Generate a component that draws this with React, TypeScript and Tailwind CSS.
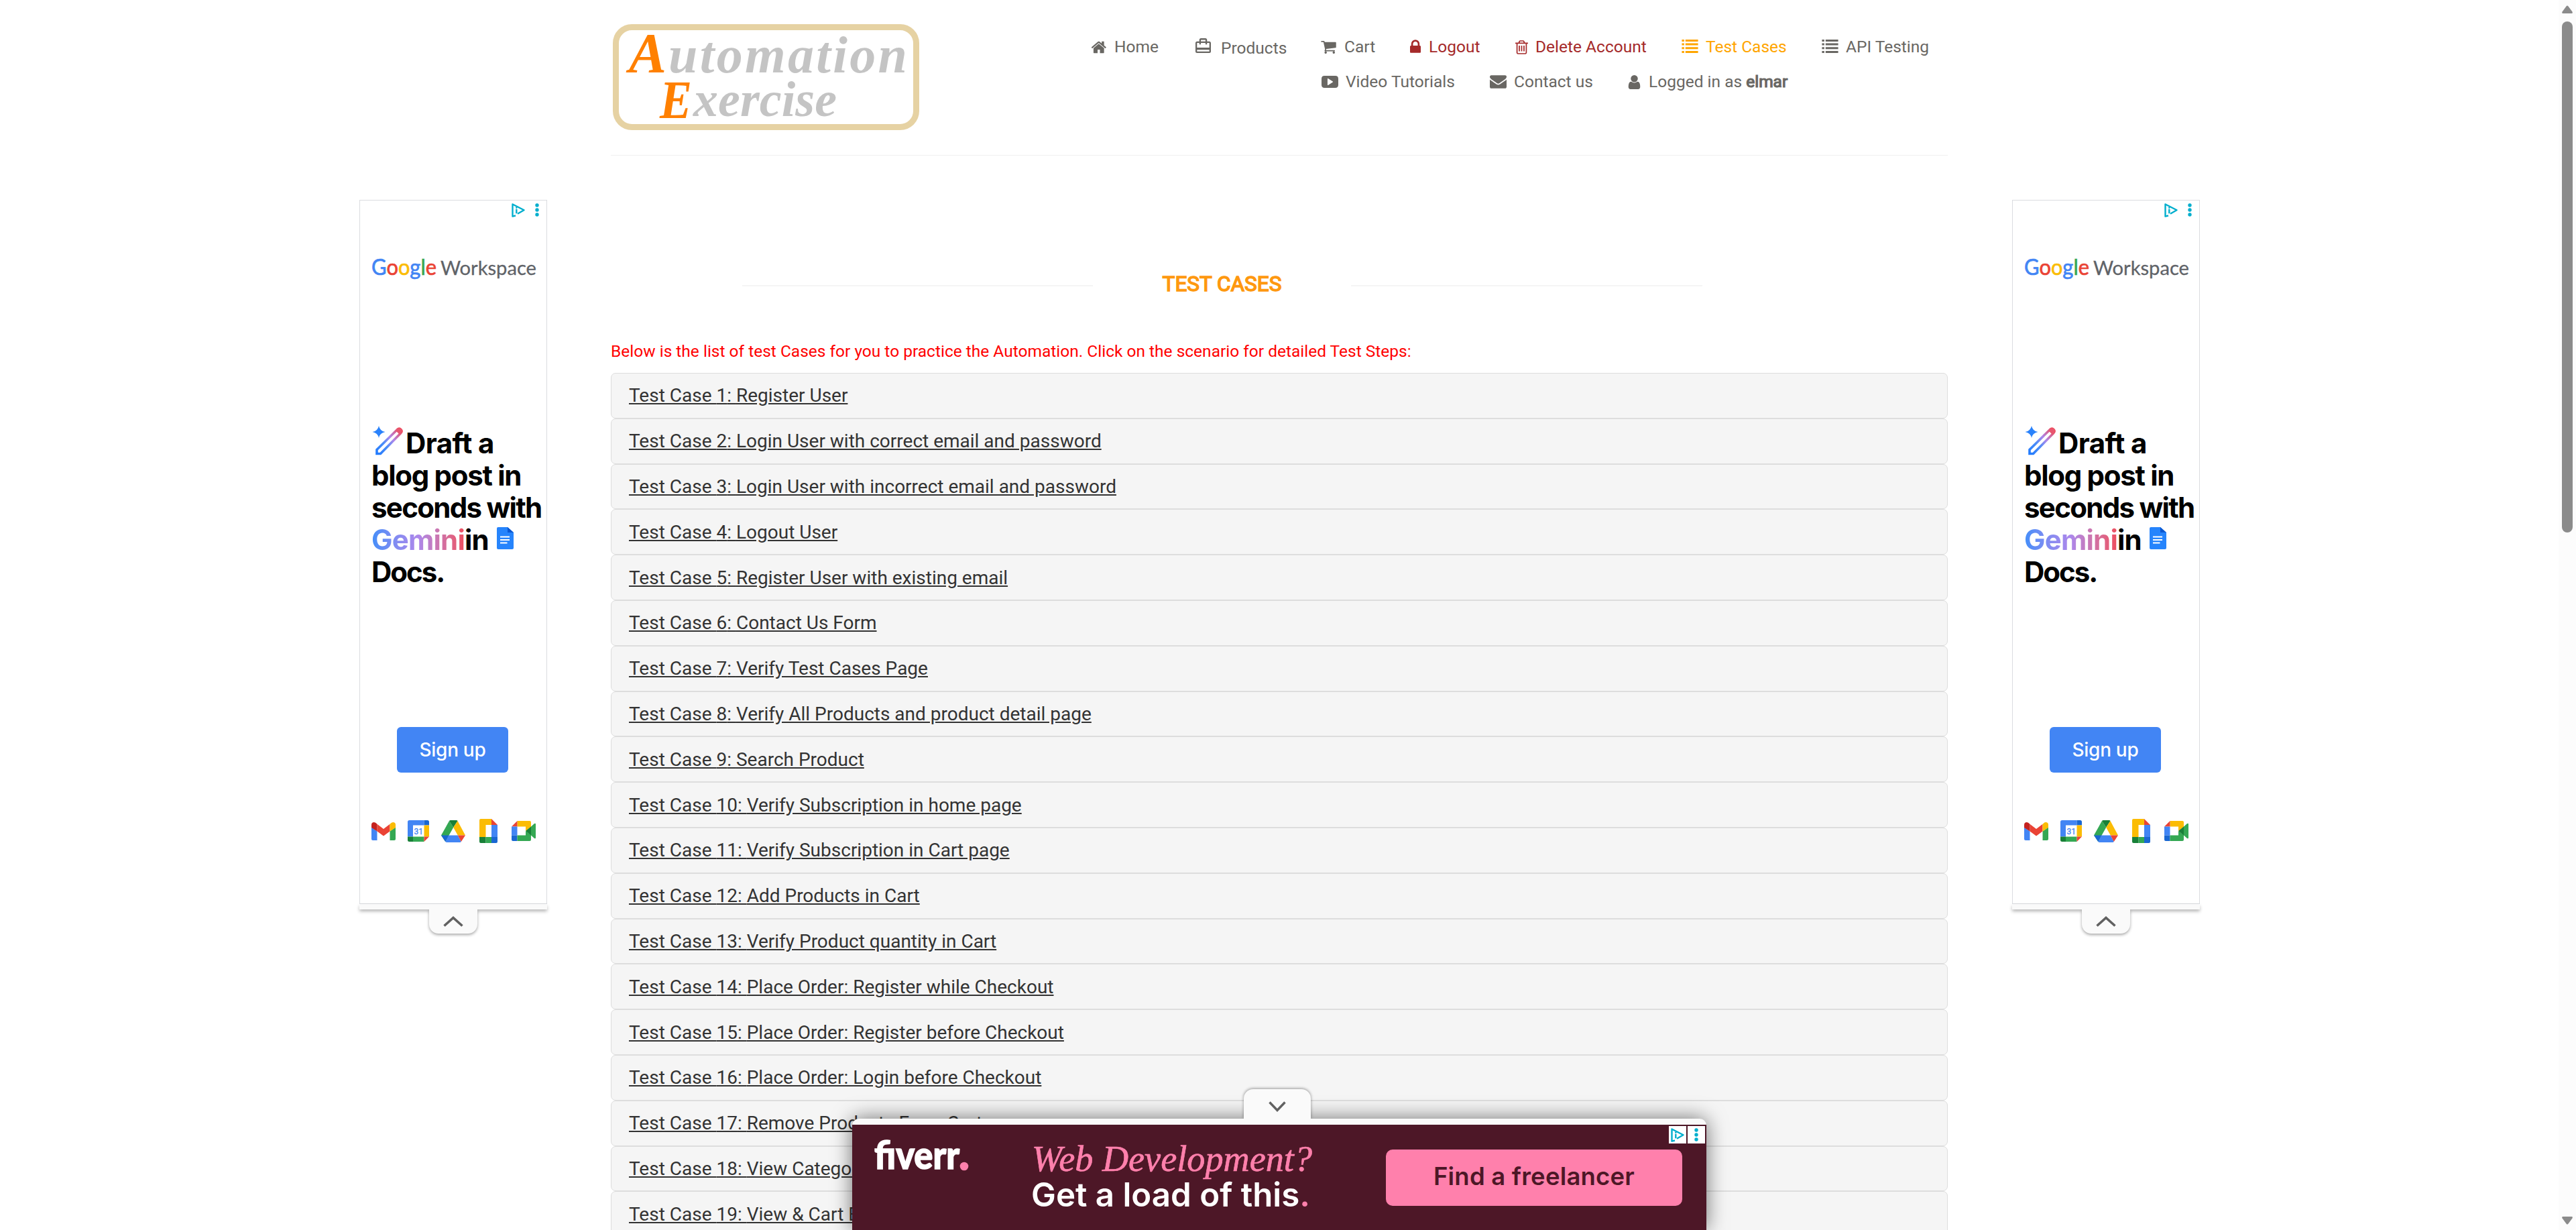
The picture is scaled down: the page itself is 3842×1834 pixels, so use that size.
import React from "react";

const ICONS = {
  home: "M1408 992v480q0 26-19 45t-45 19h-384v-384h-256v384h-384q-26 0-45-19t-19-45v-480q0-1 .5-3t.5-3l575-474 575 474q1 2 1 6zm223-69l-62 74q-8 9-21 11h-3q-13 0-21-7l-692-577-692 577q-12 8-24 7-13-2-21-11l-62-74q-8-10-7-23.5t11-21.5l719-599q32-26 76-26t76 26l244 204v-195q0-14 9-23t23-9h192q14 0 23 9t9 23v408l219 182q10 8 11 21.5t-7 23.5z",
  cart: "M704 1536q0 52-38 90t-90 38-90-38-38-90 38-90 90-38 90 38 38 90zm896 0q0 52-38 90t-90 38-90-38-38-90 38-90 90-38 90 38 38 90zm128-1088v512q0 24-16.5 42.5t-40.5 21.5l-1044 122q13 60 13 70 0 16-24 64h920q26 0 45 19t19 45-19 45-45 19h-1024q-26 0-45-19t-19-45q0-11 8-31.5t16-36 21.5-40 15.5-29.5l-177-823h-204q-26 0-45-19t-19-45 19-45 45-19h256q16 0 28.5 6.5t19.5 15.5 13 24.5 8 26 5.5 29.5 4.5 26h1201q26 0 45 19t19 45z",
  lock: "M640 768h512v-192q0-106-75-181t-181-75-181 75-75 181v192zm832 96v576q0 40-28 68t-68 28h-960q-40 0-68-28t-28-68v-576q0-40 28-68t68-28h32v-192q0-184 132-316t316-132 316 132 132 316v192h32q40 0 68 28t28 68z",
  trash: "M704 736v576q0 14-9 23t-23 9h-64q-14 0-23-9t-9-23v-576q0-14 9-23t23-9h64q14 0 23 9t9 23zm256 0v576q0 14-9 23t-23 9h-64q-14 0-23-9t-9-23v-576q0-14 9-23t23-9h64q14 0 23 9t9 23zm256 0v576q0 14-9 23t-23 9h-64q-14 0-23-9t-9-23v-576q0-14 9-23t23-9h64q14 0 23 9t9 23zm128 724v-948h-896v948q0 22 7 40.5t14.5 27 10.5 8.5h832q3 0 10.5-8.5t14.5-27 7-40.5zm-672-1076h448l-48-117q-7-9-17-11h-317q-10 2-17 11zm928 32v64q0 14-9 23t-23 9h-96v948q0 83-47 143.5t-113 60.5h-832q-66 0-113-58.5t-47-141.5v-952h-96q-14 0-23-9t-9-23v-64q0-14 9-23t23-9h309l70-167q15-37 54-63t79-26h320q40 0 79 26t54 63l70 167h309q14 0 23 9t9 23z",
  envelope: "M1792 710v794q0 66-47 113t-113 47h-1472q-66 0-113-47t-47-113v-794q44 49 101 87 362 246 497 345 57 42 92.5 65.5t94.5 48 110 24.5h2q51 0 110-24.5t94.5-48 92.5-65.5q170-123 498-345 57-39 100-87zm0-294q0 79-49 151t-122 123q-376 261-468 325-10 7-42.5 31t-54 38.5-52 32.5-57.5 27-50 9h-2q-23 0-50-9t-57.5-27-52-32.5-54-38.5-42.5-31q-91-64-262-182.5t-205-142.5q-62-42-117-115.5t-55-136.5q0-78 41.5-130t118.5-52h1472q65 0 112.5 47t47.5 113z",
  user: "M1536 1399q0 109-62.5 187t-150.5 78h-854q-88 0-150.5-78t-62.5-187q0-85 8.5-160.5t31.5-152 58.5-131 94-89 134.5-34.5q131 128 313 128t313-128q76 0 134.5 34.5t94 89 58.5 131 31.5 152 8.5 160.5zm-256-887q0 159-112.5 271.5t-271.5 112.5-271.5-112.5-112.5-271.5 112.5-271.5 271.5-112.5 271.5 112.5 112.5 271.5z",
  video: "M320 256h1152q320 0 320 320v640q0 320-320 320h-1152q-320 0-320-320v-640q0-320 320-320zm384 288q-64-30-64 40v624q0 66 64 40l500-312q44-36 0-72z",
  list: "M0 128h256v220h-256zM0 530h256v220h-256zM0 960h256v220h-256zM0 1390h256v220h-256zM400 128h1392v220h-1392zM400 530h1392v220h-1392zM400 960h1392v220h-1392zM400 1390h1392v220h-1392z",
};

type IconName = keyof typeof ICONS;

function Glyph({ name, box, className }: { name: IconName; box: string; className: string }) {
  return (
    <svg viewBox={box} className={className + " shrink-0"} fill="currentColor">
      <path fillRule="evenodd" d={ICONS[name]} />
    </svg>
  );
}

function SiteLogo() {
  return (
    <svg width="457" height="158" viewBox="914 36 457 158" className="mt-[36px] ml-[3px] shrink-0 overflow-visible">
      <rect x="918.5" y="40.5" width="448" height="149" rx="24" fill="none" stroke="#e6d2a3" strokeWidth="9" />
      <g fontFamily="'Liberation Serif', serif" fontStyle="italic" fontWeight="700">
        <text x="938" y="108" fontSize="84" fill="#ff8000" textLength="56" lengthAdjust="spacingAndGlyphs">A</text>
        <text x="997" y="108" fontSize="78" fill="#c4c4c4" textLength="356" lengthAdjust="spacing">utomation</text>
        <text x="984" y="176" fontSize="80" fill="#ff8000" textLength="48" lengthAdjust="spacingAndGlyphs">E</text>
        <text x="1034" y="173" fontSize="74" fill="#c4c4c4" textLength="214" lengthAdjust="spacing">xercise</text>
      </g>
    </svg>
  );
}

function NavItem({ width, color, icon, children }: { width: string; color: string; icon: React.ReactNode; children: React.ReactNode }) {
  return (
    <li className={"flex items-center whitespace-nowrap " + width + " " + color}>
      {icon}
      <span>{children}</span>
    </li>
  );
}

function Header() {
  return (
    <header className="flex h-[232px] border-b border-[#f0f0f0]">
      <SiteLogo />
      <nav className="ml-[257px] mt-[44px] text-[24.5px] leading-[52px] text-[#696763]">
        <ul className="flex">
          <NavItem width="w-[155px]" color="text-[#696763]" icon={<Glyph name="home" box="53 128 1664 1536" className="mr-[11px] h-[21px] w-[23px]" />}>Home</NavItem>
          <NavItem width="w-[187px]" color="text-[#696763]" icon={
            <svg viewBox="2 2 20 19" className="-mt-[5px] mr-[15px] h-[22px] w-[23px]" fill="currentColor">
              <path d="M20 6h-3V4c0-1.11-.89-2-2-2H9c-1.11 0-2 .89-2 2v2H4c-1.11 0-2 .89-2 2v11c0 1.11.89 2 2 2h16c1.11 0 2-.89 2-2V8c0-1.11-.89-2-2-2zM9 4h6v2H9V4zm11 15H4v-2h16v2zm0-5H4V8h3v2h2V8h6v2h2V8h3v6z" />
            </svg>
          }><span className="relative top-[2px]">Products</span></NavItem>
          <NavItem width="w-[133px]" color="text-[#696763]" icon={<Glyph name="cart" box="64 256 1664 1408" className="mr-[12px] h-[19px] w-[23px]" />}>Cart</NavItem>
          <NavItem width="w-[157px]" color="text-[#a52a2a]" icon={<Glyph name="lock" box="320 128 1152 1408" className="-mt-[3px] mr-[12px] h-[20px] w-[16px]" />}>Logout</NavItem>
          <NavItem width="w-[248px]" color="text-[#a52a2a]" icon={<Glyph name="trash" box="192 128 1408 1536" className="mr-[11px] h-[21px] w-[19px]" />}>Delete Account</NavItem>
          <NavItem width="w-[209px]" color="text-[#ffa500]" icon={<Glyph name="list" box="0 128 1792 1482" className="-mt-[2px] mr-[11px] h-[20px] w-[25px]" />}>Test Cases</NavItem>
          <NavItem width="w-[188px]" color="text-[#696763]" icon={<Glyph name="list" box="0 128 1792 1482" className="-mt-[2px] mr-[11px] h-[20px] w-[25px]" />}>API Testing</NavItem>
        </ul>
        <ul className="ml-[343px] flex">
          <NavItem width="w-[251px]" color="text-[#696763]" icon={<Glyph name="video" box="0 256 1792 1280" className="mr-[11px] h-[18px] w-[25px]" />}>Video Tutorials</NavItem>
          <NavItem width="w-[206px]" color="text-[#696763]" icon={<Glyph name="envelope" box="0 256 1792 1408" className="mr-[11px] h-[20px] w-[25px]" />}>Contact us</NavItem>
          <NavItem width="w-[260px]" color="text-[#696763]" icon={<Glyph name="user" box="256 128 1280 1536" className="mr-[12px] h-[21px] w-[19px]" />}>
            Logged in as <b className="font-normal [-webkit-text-stroke:1.2px_#696763]">elmar</b>
          </NavItem>
        </ul>
      </nav>
    </header>
  );
}

function AdChoices() {
  return (
    <svg width="20" height="21" viewBox="0 0 20 21" fill="none" stroke="#00aecd" strokeWidth="2.4">
      <path d="M6 18.500 1.500 19.600V1.500L18.500 10.300 9 15.800" strokeLinejoin="round" />
      <path d="M7.300 8.800v6.500" />
      <circle cx="7.300" cy="6.800" r="1.200" fill="#00aecd" stroke="none" />
    </svg>
  );
}

function Dots() {
  return (
    <svg width="6" height="20" viewBox="0 0 6 20" fill="#00aecd">
      <circle cx="3" cy="3" r="2.700" />
      <circle cx="3" cy="10" r="2.700" />
      <circle cx="3" cy="17" r="2.700" />
    </svg>
  );
}

function WorkspaceLogo() {
  return (
    <svg width="248" height="50" viewBox="0 -10 248 50" className="mt-[50px] ml-[17px] overflow-visible" fontFamily="Lato, sans-serif">
      <text x="0" y="25" fontSize="33" strokeWidth=".7" textLength="97" lengthAdjust="spacingAndGlyphs">
        <tspan fill="#4285f4" stroke="#4285f4">G</tspan><tspan fill="#ea4335" stroke="#ea4335">o</tspan><tspan fill="#fbbc04" stroke="#fbbc04">o</tspan><tspan fill="#4285f4" stroke="#4285f4">g</tspan><tspan fill="#34a853" stroke="#34a853">l</tspan><tspan fill="#ea4335" stroke="#ea4335">e</tspan>
      </text>
      <text x="103" y="25" fontSize="29.5" fill="#5f6368" stroke="#5f6368" strokeWidth=".3" textLength="143" lengthAdjust="spacingAndGlyphs">Workspace</text>
    </svg>
  );
}

function ProductIcons() {
  return (
    <div className="mt-[68px] flex h-[38px] items-center pl-[17px]">
      <svg width="36" height="27" viewBox="0 0 36 27">
        <path d="M0 7.5 8.5 13.5V27H2Q0 27 0 25Z" fill="#4285f4" />
        <path d="M36 7.5 27.5 13.5V27H34Q36 27 36 25Z" fill="#34a853" />
        <path d="M8.5 2.7 18 10 27.5 2.7V13.5L18 20.5 8.5 13.5Z" fill="#ea4335" />
        <path d="M0 8V4Q0 0 4 0 6 0 8.5 2.7V13.5Z" fill="#c5221f" />
        <path d="M36 8V4Q36 0 32 0 30 0 27.5 2.7V13.5Z" fill="#fbbc04" />
      </svg>
      <svg width="32" height="32" viewBox="0 0 32 32" className="ml-[18px]">
        <path d="M2.5 0H24.5V7.5H8V24.5H0V2.5Q0 0 2.5 0Z" fill="#4285f4" />
        <path d="M24.5 0H29.5Q32 0 32 2.5V7.5H24.5Z" fill="#1967d2" />
        <path d="M24.5 7.5H32V24.5H24.5Z" fill="#fbbc04" />
        <path d="M8 24.5H24.5V32H8Z" fill="#34a853" />
        <path d="M0 24.5H8V32H2.5Q0 32 0 29.5Z" fill="#188038" />
        <path d="M24.5 24.5H32L24.5 32Z" fill="#ea4335" />
        <text x="9.5" y="20.8" fontSize="12" fontFamily="Roboto, sans-serif" fill="#4285f4" stroke="#4285f4" strokeWidth=".3">31</text>
      </svg>
      <svg width="36" height="33" viewBox="0 0 36 33" className="ml-[18px]">
        <path d="M12 1 18.2 10.7 6.3 32 0 22.5Z" fill="#34a853" />
        <path d="M14 0H22.5Q24 0 24.5 1L18.2 10.7 12 1Q12.7 0 14 0Z" fill="#188038" />
        <path d="M24.5 1 36 22.5H24.8L18.2 10.7Z" fill="#fbbc04" />
        <path d="M11.3 22.5H24.8L29.8 32Q29 33 28 33H8.5Q7 33 6.3 32Z" fill="#4285f4" />
        <path d="M0 22.5H11.3L6.3 32Z" fill="#1967d2" />
        <path d="M24.8 22.5H36L29.8 32Z" fill="#ea4335" />
      </svg>
      <svg width="27" height="36" viewBox="0 0 27 36" className="ml-[21px]">
        <path d="M2 0H18V9H9.5V27H0V2Q0 0 2 0Z" fill="#fbbc04" />
        <path d="M18 0 27 9H18Z" fill="#ea4335" />
        <path d="M18 9H27V27H18Z" fill="#4285f4" />
        <path d="M9.5 27H18V36H9.5Z" fill="#34a853" />
        <path d="M0 27H9.5V36H2Q0 36 0 34Z" fill="#188038" />
        <path d="M18 27H27V34Q27 36 25 36H18Z" fill="#1967d2" />
      </svg>
      <svg width="36" height="30" viewBox="0 0 36 30" className="ml-[21px]">
        <path d="M8.5 0H27Q29 0 29 2V9L21 15V8.5H8.5Z" fill="#fbbc04" />
        <path d="M8.5 0V8.5H0Z" fill="#ea4335" />
        <path d="M0 8.5H8.5V21.5H0Z" fill="#4285f4" />
        <path d="M0 21.5H8.5V30H2Q0 30 0 28Z" fill="#1967d2" />
        <path d="M8.5 21.5H21V15L29 21V28Q29 30 27 30H8.5Z" fill="#34a853" />
        <path d="M29 8.5 34 4Q36 3 36 5V25Q36 27 34 26L29 21.5Z" fill="#34a853" />
        <path d="M21 15 29 8.5V21.5Z" fill="#188038" />
      </svg>
    </div>
  );
}

function SideAd() {
  return (
    <aside className="mt-[298px] w-[280px] shrink-0">
      <div className="h-[1050px] border border-[#dadce0] bg-white">
        <div className="flex h-[26px] justify-end gap-[15px] pt-[4px] pr-[11px]">
          <AdChoices />
          <Dots />
        </div>
        <WorkspaceLogo />
        <div className="mt-[212px] whitespace-nowrap pl-[17px] font-['Inter'] text-[42px] font-bold leading-[48px] text-black">
          <div className="flex h-[48px] tracking-[-0.6px]">
            <svg width="51" height="44" viewBox="0 0 50 44" className="mt-[-2px] shrink-0">
              <defs>
                <linearGradient id="pencil" x1="0" y1="1" x2="1" y2="0">
                  <stop offset="0" stopColor="#217bfe" />
                  <stop offset=".35" stopColor="#4c8df8" />
                  <stop offset=".6" stopColor="#ac87eb" />
                  <stop offset=".95" stopColor="#ee4d5d" />
                </linearGradient>
              </defs>
              <path d="M10.500 0Q12 7.500 20 9 12 10.500 10.500 18 9 10.500 1 9 9 7.500 10.500 0Z" fill="#2a82fb" />
              <path d="M7.500 35.500 38 5.500Q41 3 43.500 5.500 46 8 43 11L13 41.500H7.500Z" fill="none" stroke="url(#pencil)" strokeWidth="3.600" />
              <path d="M36 7.500Q41 2 44 5 47 8 41.500 13Z" fill="#e8566f" />
            </svg>
            <span>Draft a</span>
          </div>
          <div className="tracking-[-1.300px]">blog post in</div>
          <div className="tracking-[-1.700px]">seconds with</div>
          <div className="flex tracking-[-0.800px]">
            <span className="bg-gradient-to-r from-[#3f8ef9] via-[#ac87eb] to-[#ee4d5d] bg-clip-text text-transparent">Gemini</span>
            <span>in</span>
            <svg width="25" height="33" viewBox="0 0 25 33" className="mt-[5px] ml-[12px]">
              <path d="M2 0H16L25 8V31Q25 33 23 33H2Q0 33 0 31V2Q0 0 2 0Z" fill="#2684fc" />
              <path d="M16 0 25 8H16Z" fill="#0b57d0" />
              <path d="M5 14.500H19M5 19H19M5 23.500H15.500" stroke="#fff" strokeWidth="2" />
            </svg>
          </div>
          <div className="tracking-[-2px]">Docs.</div>
        </div>
        <div className="mt-[207px] ml-[55px] flex h-[68px] w-[166px] items-center justify-center rounded-[6px] bg-[#4285f4] font-['Inter'] text-[28px] font-medium tracking-[-0.300px] text-white">
          Sign up
        </div>
        <ProductIcons />
      </div>
      <div className="h-[8px] bg-[#fafafa] shadow-[0_3px_5px_rgba(0,0,0,0.28)]" />
      <div className="relative ml-[104px] flex h-[36px] w-[72px] items-center justify-center rounded-b-[14px] bg-[#fafafa] shadow-[0_2px_4px_rgba(0,0,0,0.35)] [clip-path:inset(0_-10px_-10px_-10px)]">
        <svg width="30" height="16" viewBox="0 0 30 16" fill="none" stroke="#616161" strokeWidth="3.600">
          <path d="M1.500 14.500 15 2.500 28.500 14.500" />
        </svg>
      </div>
    </aside>
  );
}

const CASES = [
  "Register User",
  "Login User with correct email and password",
  "Login User with incorrect email and password",
  "Logout User",
  "Register User with existing email",
  "Contact Us Form",
  "Verify Test Cases Page",
  "Verify All Products and product detail page",
  "Search Product",
  "Verify Subscription in home page",
  "Verify Subscription in Cart page",
  "Add Products in Cart",
  "Verify Product quantity in Cart",
  "Place Order: Register while Checkout",
  "Place Order: Register before Checkout",
  "Place Order: Login before Checkout",
  "Remove Products From Cart",
  "View Category Products",
  "View & Cart Brand Products",
];

function TestCases() {
  return (
    <main>
      <div className="ml-[196px] mt-[170px] flex h-[44px] w-[1432px] items-center justify-between">
        <div className="mt-[4px] h-[2px] w-[523px] bg-[#f5f5f5]" />
        <h2 className="text-[31.500px] font-normal leading-[44px] text-[#fe980f] [-webkit-text-stroke:1.500px_#fe980f]">TEST CASES</h2>
        <div className="mt-[4px] h-[2px] w-[524px] bg-[#f5f5f5]" />
      </div>
      <p className="mt-[60px] h-[50px] whitespace-nowrap text-[24.500px] leading-[35px] text-[#ff0000]">
        Below is the list of test Cases for you to practice the Automation. Click on the scenario for detailed Test Steps:
      </p>
      {CASES.map((name, i) => (
        <div key={name} className="flex h-[67.800px] items-center rounded-[7px] border border-[#dddddd] bg-[#f5f5f5] pl-[26px]">
          <a className="whitespace-nowrap text-[28px] leading-[31px] text-[#333333] underline">
            Test Case {i + 1}: {name}
          </a>
        </div>
      ))}
    </main>
  );
}

function BottomAd() {
  return (
    <div className="absolute top-[1624px] left-[1271px] w-[1274px]">
      <div className="relative z-10 ml-[584px] flex h-[44px] w-[100px] items-center justify-center rounded-t-[14px] bg-[#fafafa] pt-[7px] shadow-[0_-1px_4px_rgba(0,0,0,0.4)] [clip-path:inset(-10px_-10px_0_-10px)]">
        <svg width="26" height="16" viewBox="0 0 26 16" fill="none" stroke="#616161" strokeWidth="3.400">
          <path d="M1.500 1.500 13 13.500 24.500 1.500" />
        </svg>
      </div>
      <div className="h-[166px] rounded-t-[10px] bg-[#fafafa] pt-[9px] shadow-[0_0_30px_rgba(0,0,0,0.55)]">
        <div className="flex h-[157px] bg-[#4d1727]">
          <svg width="144" height="70" viewBox="0 0 144 70" className="mt-[16px] ml-[32px] shrink-0 overflow-visible" fontFamily="Lato, sans-serif">
            <text x="1" y="50" fontSize="57" fontWeight="900" fill="#fff" stroke="#fff" strokeWidth="1.500" textLength="127" lengthAdjust="spacingAndGlyphs">fiverr</text>
            <circle cx="135" cy="46" r="6.300" fill="#ff80ac" />
          </svg>
          <svg width="430" height="140" viewBox="0 0 430 140" className="ml-[85px] shrink-0 overflow-visible">
            <text x="7" y="69" fontSize="55" fontFamily="'Liberation Serif', serif" fontStyle="italic" fill="#ff80ac" stroke="#ff80ac" strokeWidth=".7" textLength="418" lengthAdjust="spacingAndGlyphs">Web Development?</text>
            <text x="6" y="122" fontSize="49" fontFamily="Inter, sans-serif" fontWeight="600" fill="#fff" textLength="416" lengthAdjust="spacingAndGlyphs">Get a load of this<tspan fill="#ff80ac">.</tspan></text>
          </svg>
          <div className="mt-[37px] ml-[105px] flex h-[84px] w-[442px] shrink-0 items-center justify-center rounded-[10px] bg-[#ff80ac] pb-[3px] font-['Inter'] text-[36.500px] font-semibold tracking-[0.200px] text-[#4d1727]">
            Find a freelancer
          </div>
          <div className="absolute top-[55px] right-[2px] flex gap-[2px]">
            <div className="flex h-[26px] w-[26px] items-center justify-center bg-white"><AdChoices /></div>
            <div className="flex h-[26px] w-[26px] items-center justify-center bg-white"><Dots /></div>
          </div>
        </div>
      </div>
    </div>
  );
}

function Scrollbar() {
  return (
    <div className="flex w-[26px] shrink-0 flex-col items-center justify-between bg-[#fcfcfc] pt-[8px] pb-[8px]">
      <div className="flex flex-col items-center">
        <svg width="16" height="12" viewBox="0 0 16 12" fill="#8b8b8b"><path d="M7 .8Q8 0 9 .8L15.500 9.500Q16.500 12 14.500 12H1.500Q-.5 12 .5 9.500Z" /></svg>
        <div className="mt-[12px] h-[762px] w-[16px] rounded-full bg-[#8b8b8b]" />
      </div>
      <svg width="16" height="12" viewBox="0 0 16 12" fill="#8b8b8b"><path d="M7 11.200Q8 12 9 11.200L15.500 2.500Q16.500 0 14.500 0H1.500Q-.5 0 .5 2.500Z" /></svg>
    </div>
  );
}

export default function App() {
  return (
    <div className="relative flex h-[1834px] w-[3842px] overflow-hidden bg-white font-['Roboto']">
      <div className="flex min-w-0 flex-1 pl-[536px]">
        <SideAd />
        <div className="mr-[96px] ml-[95px] w-[1994px] shrink-0">
          <Header />
          <TestCases />
        </div>
        <SideAd />
      </div>
      <Scrollbar />
      <BottomAd />
    </div>
  );
}
